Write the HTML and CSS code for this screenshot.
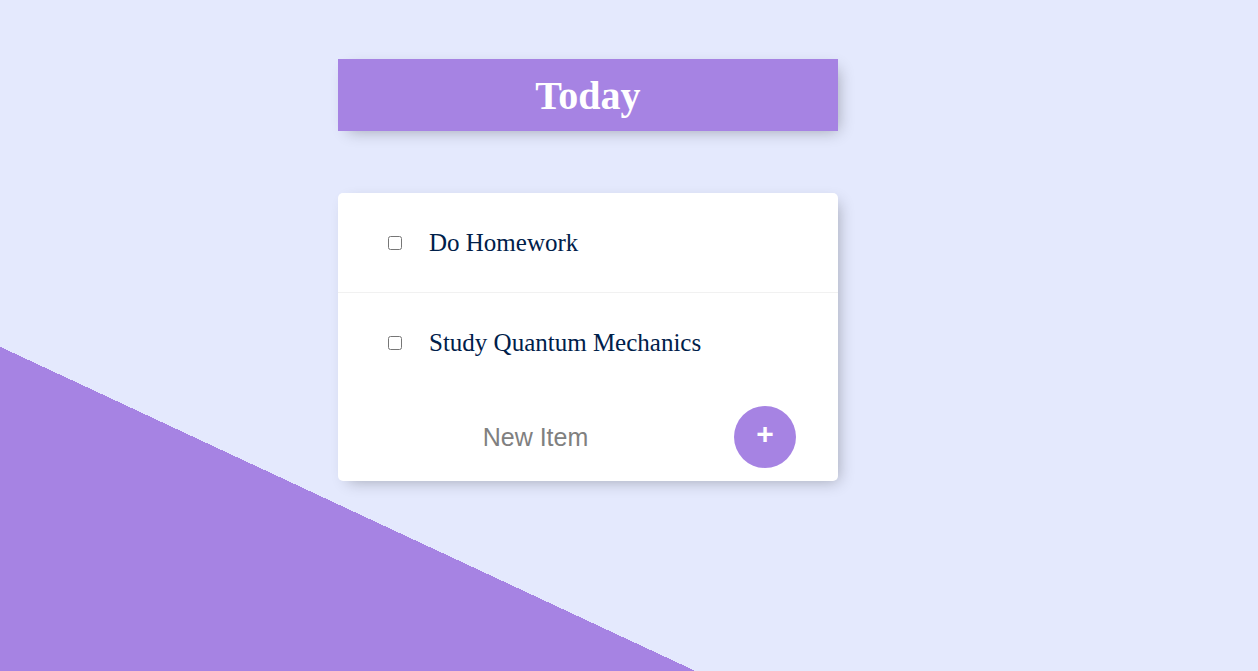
FILE: index.html
```html
<!DOCTYPE html>
<html lang="en">
<head>
<meta charset="utf-8">
<title>To-Do List</title>
<link rel="stylesheet" href="styles.css">
</head>
<body>
  <div class="box heading">
    <h1>Today</h1>
  </div>
  <div class="box list">
    <div class="item">
      <input type="checkbox">
      <p>Do Homework</p>
    </div>
    <div class="item">
      <input type="checkbox">
      <p>Study Quantum Mechanics</p>
    </div>
    <form class="new-item" onsubmit="return false">
      <input type="text" name="newItem" placeholder="New Item" autocomplete="off">
      <button type="submit" name="list">+</button>
    </form>
  </div>
</body>
</html>
```
FILE: styles.css
```css
html {
  background-color: #E4E9FD;
  background-image: linear-gradient(25deg, #A683E3 50%, #E4E9FD 50%);
  background-size: 1258px 1280px;
  background-repeat: no-repeat;
  background-position: 0 0;
  height: 100%;
}

body {
  margin: 0;
  width: 1176px;
  height: 100%;
  box-sizing: border-box;
  padding-top: 59px;
  font-family: "Liberation Sans", Arial, sans-serif;
}

.box {
  width: 500px;
  margin: 0 auto;
  box-shadow: 5px 5px 15px -5px rgba(0, 0, 0, 0.3);
}

.heading {
  background-color: #A683E3;
  height: 72px;
  display: flex;
  align-items: center;
  justify-content: center;
  margin-bottom: 62px;
}

.heading h1 {
  margin: 0;
  color: #fff;
  font-family: "Liberation Serif", "Times New Roman", serif;
  font-size: 40px;
  font-weight: bold;
}

.list {
  background: #fff;
  border-radius: 5px;
}

.item {
  height: 100px;
  box-sizing: border-box;
  display: flex;
  align-items: center;
  padding-left: 47px;
  border-bottom: 1px solid #F1F1F1;
}

.item:nth-child(2) {
  border-bottom: 0;
}

.item input[type="checkbox"] {
  margin: 0 0 0 3px;
  width: 14px;
  height: 14px;
}

.item p {
  margin: 0 0 0 27px;
  font-family: "Liberation Serif", "Times New Roman", serif;
  font-size: 25px;
  color: #00204a;
}

.new-item {
  height: 88px;
  display: flex;
  align-items: center;
  padding: 0 42px 0 40px;
  margin: 0;
}

.new-item input[type="text"] {
  width: 315px;
  height: 60px;
  box-sizing: border-box;
  border: none;
  background: transparent;
  text-align: center;
  font-family: "Liberation Sans", Arial, sans-serif;
  font-size: 25px;
  padding: 0;
  outline: none;
}

.new-item input[type="text"]::placeholder {
  color: grey;
  opacity: 1;
}

.new-item button {
  margin-left: auto;
  width: 62px;
  height: 62px;
  border-radius: 50%;
  border: 0;
  padding: 0 0 6px 0;
  background-color: #A683E3;
  color: #fff;
  font-family: "Liberation Sans", Arial, sans-serif;
  font-size: 30px;
  font-weight: bold;
  line-height: 1;
  display: flex;
  align-items: center;
  justify-content: center;
}
```
